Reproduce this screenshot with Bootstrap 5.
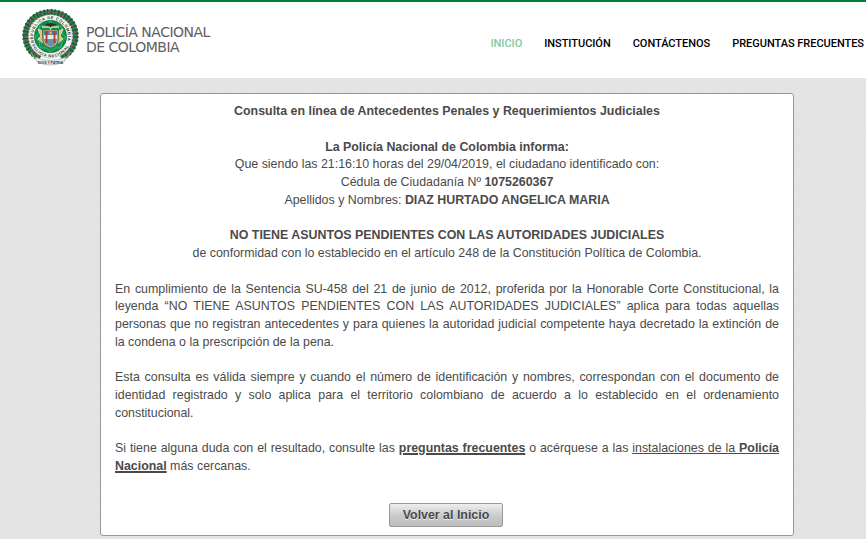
<!DOCTYPE html>
<html lang="es">
<head>
<meta charset="utf-8">
<meta name="viewport" content="width=device-width, initial-scale=1">
<title>Policía Nacional de Colombia</title>
<link href="https://cdn.jsdelivr.net/npm/bootstrap@5.3.0/dist/css/bootstrap.min.css" rel="stylesheet">
<style>
body{height:539px;overflow:hidden;background:repeating-linear-gradient(135deg,#e4e4e4 0 2px,#e2e2e2 2px 3px);font-family:"Liberation Sans",Arial,sans-serif;font-size:12.4px;color:#4a4a4a}
.site-header{height:78px;border-top:2px solid #007a3d;background:#fff;padding-left:22px}
.crest{width:58px;height:58px;margin-top:7px;overflow:visible}
.wordmark{font:14px/15px "DejaVu Sans",Verdana,sans-serif;letter-spacing:-.5px;color:#606060;margin:23px 0 0 6px;white-space:nowrap}
.site-nav{gap:22px;margin-top:34px;padding-right:2px}
.site-nav .nav-link{font:500 11px/16px Roboto,sans-serif;letter-spacing:-.03px;color:#000;padding:0;white-space:nowrap}
.site-nav .nav-link.active{color:#7fc9a0}
.result{width:694px;height:443px;margin:15px 0 0 100px;border:1px solid #999;border-radius:3px;padding:9px 14px 0;line-height:17.76px}
.result p{margin:0 0 17.76px}
.result a{color:inherit}
.just{text-align:justify}
.heavy{text-decoration-thickness:2px}
.thin{text-decoration-thickness:1px}
.btn-back{width:114px;height:24px;padding:0;border:1px solid #999;border-radius:2px;background:linear-gradient(#eee,#ccc 50%,#bcbcbc);color:#4a4a4a;font-size:12.4px;font-weight:700;line-height:22px;text-shadow:0 1px #eee;margin:1px 2px 0 0}
</style>
<script src="https://cdn.jsdelivr.net/npm/bootstrap@5.3.0/dist/js/bootstrap.bundle.min.js"></script>
</head>
<body>
<header class="site-header d-flex align-items-start">
<svg class="crest flex-shrink-0" viewBox="0 0 58 58" role="img" aria-label="Escudo">
<defs><path id="arcTop" d="M12.3 33.5A17.3 17.3 0 1 1 44.7 33.5"/><path id="arcLow" d="M9.8 36A20.4 20.4 0 0 0 47.2 36"/></defs>
<path d="M18 49C-2 40-2 10 22 4L28.5 3 35 4C59 10 59 40 39 49" fill="none" stroke="#347b53" stroke-width="5.5"/>
<path d="M18 49C-2 40-2 10 22 4L28.5 3 35 4C59 10 59 40 39 49" fill="none" stroke="#195834" stroke-width="6.5" stroke-dasharray="1.3 2.2"/>
<path d="M16 46C-1 36 1 12 22 4L28.5 3 35 4C56 12 58 36 41 46" fill="none" stroke="#d03c42" stroke-width="2" stroke-dasharray="1.7 5.5"/>
<circle cx="28.5" cy="27.5" r="21.7" fill="#f7f8f4" stroke="#9ba99d" stroke-width=".5"/>
<circle cx="28.5" cy="27.5" r="16.2" fill="#07904a" stroke="#195d38" stroke-width=".6"/>
<path d="M28.5 12 33 17 40 17 40 24 44 28 40 33 39 39 33 39 28.5 43 24 39 18 39 17 33 13 28 17 24 17 17 24 17Z" fill="#0a9b50" stroke="#8bc29a" stroke-width=".5"/>
<path d="M20 22 16 20 19 27 16 30 21 34M37 22 41 20 38 27 41 30 36 34" fill="#d6c477" stroke="#e9ddb0"/>
<path d="M21 21H36V32Q35 37 28.5 39Q22 37 21 32Z" fill="#e8dfb8" stroke="#6d5426"/>
<path d="M22 22H35V26H22Z" fill="#4d7fb2"/><path d="M22 26H35V30H22Z" fill="#ede9df"/><path d="M22 30H35Q35 36 28.5 38Q22 36 22 30" fill="#6294ae"/>
<path d="M24.5 22V34M32.5 22V34" stroke="#aa3935" stroke-width="1.8"/><circle cx="28.5" cy="24" r="1.6" fill="#d6a731"/>
<path d="M22 16Q28.5 12 35 16L31 17 30 20H27L26 17Z" fill="#322d27"/><path d="M20 18 27 18 28.5 20 30 18 37 18" fill="none" stroke="#d5d5c9" stroke-width="1.3"/>
<text font-family="Liberation Sans" font-size="4" font-weight="700" fill="#26382c"><textPath href="#arcTop" textLength="64">REPUBLICA DE COLOMBIA</textPath></text>
<text font-family="Liberation Sans" font-size="4" font-weight="700" fill="#26382c"><textPath href="#arcLow" textLength="46">POLICIA NACIONAL</textPath></text>
<path d="M9 43Q12 50 18 52M48 43Q45 50 39 52" fill="none" stroke="#819484" stroke-width="1.5"/>
<path d="M13 48Q28.5 55 44 48L42 53Q28.5 59 15 53Z" fill="#eceeea" stroke="#829186" stroke-width=".5"/>
<text x="28.5" y="55.2" text-anchor="middle" textLength="25" lengthAdjust="spacingAndGlyphs" font-family="Liberation Sans" font-size="3.8" font-weight="700" fill="#343b35">DIOS Y PATRIA</text>
</svg>
<div class="wordmark">POLICÍA NACIONAL<br>DE COLOMBIA</div>
<nav class="nav site-nav ms-auto flex-nowrap">
<a class="nav-link active" href="#">INICIO</a><a class="nav-link" href="#">INSTITUCIÓN</a><a class="nav-link" href="#">CONTÁCTENOS</a><a class="nav-link" href="#">PREGUNTAS FRECUENTES</a>
</nav>
</header>
<main class="result bg-white">
<div class="text-center">
<p><b>Consulta en línea de Antecedentes Penales y Requerimientos Judiciales</b></p>
<p><b>La Policía Nacional de Colombia informa:</b><br>Que siendo las 21:16:10 horas del 29/04/2019, el ciudadano identificado con:<br>Cédula de Ciudadanía Nº <b>1075260367</b><br>Apellidos y Nombres: <b>DIAZ HURTADO ANGELICA MARIA</b></p>
<p><b>NO TIENE ASUNTOS PENDIENTES CON LAS AUTORIDADES JUDICIALES</b><br>de conformidad con lo establecido en el artículo 248 de la Constitución Política de Colombia.</p>
</div>
<div class="just">
<p>En cumplimiento de la Sentencia SU-458 del 21 de junio de 2012, proferida por la Honorable Corte Constitucional, la leyenda “NO TIENE ASUNTOS PENDIENTES CON LAS AUTORIDADES JUDICIALES” aplica para todas aquellas personas que no registran antecedentes y para quienes la autoridad judicial competente haya decretado la extinción de la condena o la prescripción de la pena.</p>
<p>Esta consulta es válida siempre y cuando el número de identificación y nombres, correspondan con el documento de identidad registrado y solo aplica para el territorio colombiano de acuerdo a lo establecido en el ordenamiento constitucional.</p>
<p>Si tiene alguna duda con el resultado, consulte las <a class="heavy fw-bold" href="#">preguntas frecuentes</a> o acérquese a las <a class="thin" href="#">instalaciones de la <b>Policía</b></a> <a class="heavy fw-bold" href="#">Nacional</a> más cercanas.</p>
</div>
<div class="text-center pt-2"><button class="btn btn-back" type="button">Volver al Inicio</button></div>
</main>
</body>
</html>
